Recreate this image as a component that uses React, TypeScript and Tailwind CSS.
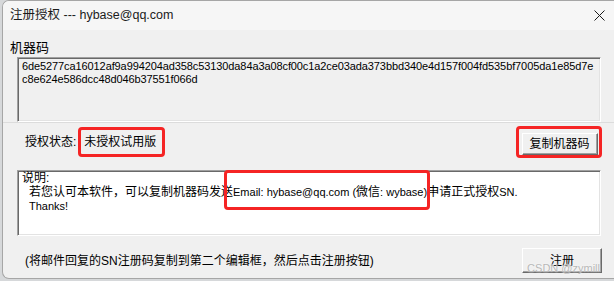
import React from 'react';

const machineCode = [
  '6de5277ca16012af9a994204ad358c53130da84a3a08cf00c1a2ce03ada373bbd340e4d157f004fd535bf7005da1e85d7e',
  'c8e624e586dcc48d046b37551f066d',
];

const sunken =
  'border border-t-[#a0a0a0] border-l-[#a0a0a0] border-r-white border-b-white shadow-[inset_1px_1px_0_#696969,inset_-1px_-1px_0_#e3e3e3]';

const winButton =
  'bg-[#f0f0f0] border border-t-white border-l-white border-r-[#696969] border-b-[#696969] shadow-[inset_-1px_-1px_0_#a0a0a0] text-[12px] text-black';

const App: React.FC = () => {
  return (
    <div className="w-[614px] h-[281px] bg-[#d6d8da] overflow-hidden font-['Liberation_Sans','Noto_Sans_CJK_SC',sans-serif] text-black">
      <div className="ml-[2px] w-[612px] h-[279px] bg-[#f0f0f0] rounded-l-[7px] border border-r-0 border-[#a6a6a6] overflow-hidden flex flex-col relative">
        {/* Title bar */}
        <div className="h-[29px] bg-[#f6f6f6] flex items-center justify-between pl-[7px] pr-[8px]">
          <span className="text-[12.5px] text-[#1b1b1b]">注册授权 --- hybase@qq.com</span>
          <svg width="11" height="11" viewBox="0 0 11 11" className="mr-[1px]">
            <path d="M0.5 0.5 L10.5 10.5 M10.5 0.5 L0.5 10.5" stroke="#1b1b1b" strokeWidth="1" />
          </svg>
        </div>

        {/* Machine code */}
        <div className="border-b border-[#dcdcdc]">
          <div className="mt-[9px] ml-[7px] h-[17px] leading-[17px] text-[13px]">机器码</div>
          <div className={`ml-[14px] mr-[13px] mt-[1px] h-[65px] pl-[4px] pt-[2px] ${sunken} bg-[#f0f0f0]`}>
            {machineCode.map((line) => (
              <div key={line} className="text-[11px] leading-[13px] tracking-[-0.1px] whitespace-nowrap">
                {line}
              </div>
            ))}
          </div>
        </div>

        {/* Status row */}
        <div className="h-[37px] flex items-center justify-between pl-[22px] pr-[12px]">
          <div className="flex items-center text-[12px]">
            <span>授权状态:</span>
            <span className="ml-[2px] h-[30px] flex items-center pl-[3px] pr-[6px] border-[3px] border-[#f52424] rounded-[4px]">
              未授权试用版
            </span>
          </div>
          <div className="h-[32px] w-[86px] border-[3px] border-[#f52424] rounded-[4px] flex items-end justify-center pl-[1px]">
            <button className={`w-[76px] h-[22px] ${winButton}`}>复制机器码</button>
          </div>
        </div>

        {/* Description */}
        <div className={`mt-[10px] ml-[14px] mr-[13px] h-[66px] bg-white pl-[4px] ${sunken} text-[12px] leading-[14px]`}>
          <div>说明:</div>
          <div className="pl-[7px] whitespace-nowrap">
            若您认可本软件，可以复制机器码发送
            <span className="relative">
              <span className="text-[11px]">Email: hybase@qq.com (</span>
              微信
              <span className="text-[11px]">: wybase)</span>
              <span className="absolute -left-[9px] -right-[3px] -top-[15px] -bottom-[11px] border-[3px] border-[#f52424] rounded-[4px]" />
            </span>
            申请正式授权<span className="text-[11px]">SN.</span>
          </div>
          <div className="pl-[7px] text-[11px]">Thanks!</div>
        </div>

        {/* Bottom row */}
        <div className="mt-[12px] flex items-center justify-between pl-[22px] pr-[12px]">
          <span className="text-[12px]">(将邮件回复的SN注册码复制到第二个编辑框，然后点击注册按钮)</span>
          <button className={`w-[80px] h-[25px] ${winButton}`}>注册</button>
        </div>

        {/* Watermark */}
        <span className="absolute right-[14px] bottom-[2px] text-[11px] text-[#b8b8b8] [text-shadow:0_0_2px_#ffffff]">
          CSDN @zymill
        </span>
      </div>
    </div>
  );
};

export default App;
